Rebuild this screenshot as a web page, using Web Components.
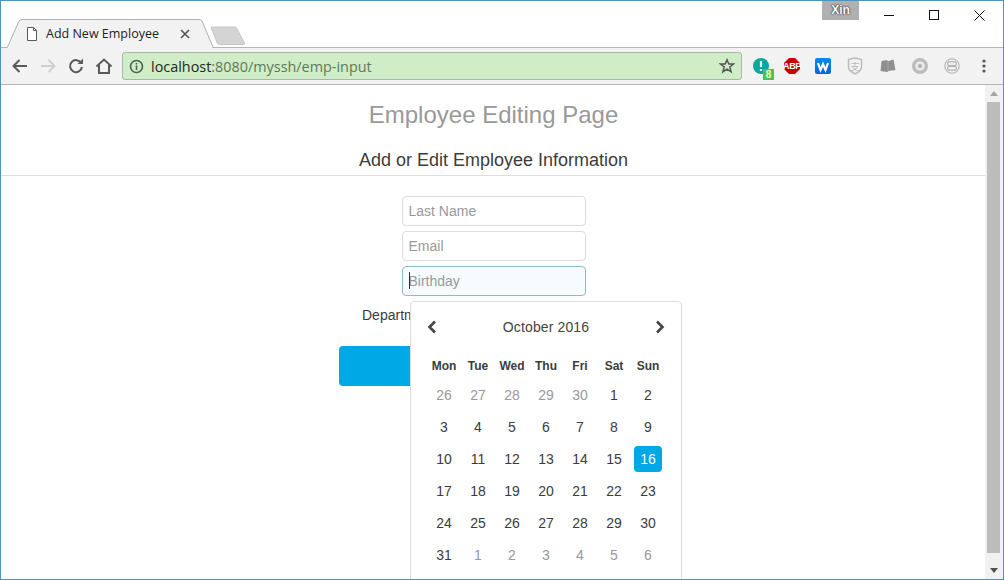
<!DOCTYPE html>
<html><head><meta charset="utf-8"><title>Add New Employee</title>
<style>html,body{margin:0;padding:0;width:1004px;height:580px;overflow:hidden;background:#fff}</style>
</head><body>
<browser-window>
  <browser-tabstrip slot="strip"></browser-tabstrip>
  <browser-toolbar slot="toolbar"></browser-toolbar>
  <browser-scrollbar slot="scroll"></browser-scrollbar>
  <employee-page></employee-page>
</browser-window>
<script>
function def(name, html){
  customElements.define(name, class extends HTMLElement{
    constructor(){super();this.attachShadow({mode:'open'}).innerHTML=html;}
  });
}
def('browser-window',`<style>
:host{display:flex;flex-direction:column;width:1004px;height:580px;box-sizing:border-box;border:1px solid #4a94bd;border-bottom-color:#5b8fb0;background:#fff;overflow:hidden}
.main{display:flex;flex:1;min-height:0}
.content{flex:1;min-width:0;position:relative;overflow:hidden}
</style><slot name="strip"></slot><slot name="toolbar"></slot>
<div class="main"><div class="content"><slot></slot></div><slot name="scroll"></slot></div>`);

def('browser-tabstrip',`<style>
:host{display:flex;height:47px;background:#fff;align-items:flex-start;position:relative;font-family:"Open Sans","Noto Sans",sans-serif}
.tab{position:relative;width:208px;height:29px;margin:18px 0 0 5px;display:flex;align-items:center;box-sizing:border-box;padding:0 0 0 20px;font-size:12.5px;color:#222;z-index:1}
.tab svg.bg{position:absolute;left:0;top:0}
.tab>*:not(.bg){position:relative}
.tab .title{margin-left:8px;width:134px;white-space:nowrap}
.new{margin:25px 0 0 -4px;flex:none}
.spacer{flex:1}
.xin{width:37px;height:19px;background:#b0b0b0;color:#fff;font:bold 12px/19px "Liberation Sans",sans-serif;text-align:center;text-shadow:0 0 2px #222,0 0 1px #222;margin-right:8px}
.ctl{width:45px;height:29px;display:flex;align-items:center;justify-content:center}
.ctl:last-child{margin-right:1px}
.line{position:absolute;left:0;right:0;bottom:0;height:1px;background:#b4b4b4}
</style>
<div class="line"></div>
<div class="tab">
<svg class="bg" width="208" height="29" viewBox="0 0 208 29"><path d="M0.5 29 L1.5 28 L13 2 Q14 .5 16 .5 L193 .5 Q195 .5 196 2 L207 28 L208 29Z" fill="#f2f2f2" stroke="#b0b0b0"/><rect x="2" y="28" width="204" height="1" fill="#f2f2f2"/></svg>
<svg width="12" height="14" viewBox="0 0 12 14"><path d="M1.5.5H7.5L10.5 3.5V13.5H1.5Z M7.5.5V3.5H10.5" fill="#fff" stroke="#5a5a5a"/></svg>
<span class="title">Add New Employee</span>
<svg width="10" height="10" viewBox="0 0 10 10"><path d="M1 1L9 9M9 1L1 9" stroke="#5a5a5a" stroke-width="1.7"/></svg>
</div>
<svg class="new" width="36" height="20" viewBox="0 0 36 20"><path d="M1 1.5Q1 1 2 1H25Q26 1 26.5 2L34.5 17Q35 18.500 33 18.500H9Q8 18.500 7.500 17.500Z" fill="#d4d4d4" stroke="#c6c6c6"/></svg>
<div class="spacer"></div>
<div class="xin">Xin</div>
<div class="ctl"><svg width="11" height="11" viewBox="0 0 11 11"><path d="M0 5.500H10" stroke="#111"/></svg></div>
<div class="ctl"><svg width="11" height="11" viewBox="0 0 11 11"><rect x=".5" y=".5" width="9" height="9" fill="none" stroke="#111"/></svg></div>
<div class="ctl"><svg width="11" height="11" viewBox="0 0 11 11"><path d="M.5.5L10.500 10.500M10.500.5L.5 10.500" stroke="#111"/></svg></div>`);

def('browser-toolbar',`<style>
:host{display:flex;align-items:center;height:37px;box-sizing:border-box;padding:0 0 0 5px;background:#f2f2f2;border-bottom:1px solid #b4b4b4}
.b{width:28px;height:28px;display:flex;align-items:center;justify-content:center;flex:none}
.omni{width:620px;height:28px;box-sizing:border-box;margin-left:4px;background:#cfedc7;border:1px solid #a9b5a6;border-radius:3px;display:flex;align-items:center;padding:0 6px 0 6px;font:14.4px "Open Sans","Noto Sans",sans-serif;color:#5d7a5a;flex:none}
.omni b{font-weight:400;color:#1c2a1a}
.url{flex:1;margin-left:7px;white-space:nowrap}
.exts{display:flex;margin-left:3px}
.e{width:32px;height:28px;display:flex;align-items:center;justify-content:center;position:relative}
.t{margin-left:-1px}
.g{margin-left:1px}
.badge{position:absolute;left:18px;top:17px;width:11px;height:11px;background:#4cc44c;color:#f2ffd0;font:bold 10px/11px "Liberation Sans",sans-serif;text-align:center}
.abp{position:absolute;color:#fff;font:bold 9px "Liberation Sans",sans-serif;letter-spacing:-.4px}
.shield{font:9px "Noto Sans CJK SC",sans-serif;fill:#b5b5b5}
</style>
<div class="b"><svg width="18" height="18" viewBox="0 0 18 18"><path d="M16 9H3M8.500 3L2.500 9L8.500 15" fill="none" stroke="#5a5a5a" stroke-width="2"/></svg></div>
<div class="b"><svg width="18" height="18" viewBox="0 0 18 18"><path d="M2 9H15M9.500 3L15.500 9L9.500 15" fill="none" stroke="#cfcfcf" stroke-width="2"/></svg></div>
<div class="b"><svg width="18" height="18" viewBox="0 0 18 18"><path d="M14.200 6A6 6 0 1 0 15 10" fill="none" stroke="#5a5a5a" stroke-width="2"/><path d="M10.500 7H16V1.500Z" fill="#5a5a5a"/></svg></div>
<div class="b"><svg width="18" height="18" viewBox="0 0 18 18"><path d="M1.500 9.500L9 2.500L16.500 9.500M4 8V16H14V8" fill="none" stroke="#5a5a5a" stroke-width="2"/></svg></div>
<div class="omni">
<svg width="15" height="15" viewBox="0 0 15 15"><circle cx="7.500" cy="7.500" r="6" fill="none" stroke="#4f5f4c" stroke-width="1.600"/><path d="M7.500 6.500V11M7.500 4V5.500" stroke="#4f5f4c" stroke-width="1.600"/></svg>
<span class="url"><b>localhost</b>:8080/myssh/emp-input</span>
<svg width="16" height="16" viewBox="0 0 16 16"><path d="M8 1.800L9.800 6H14.500L10.800 9L12.100 13.800L8 11.100L3.900 13.800L5.200 9L1.500 6H6.200Z" fill="none" stroke="#555" stroke-width="1.500"/></svg>
</div>
<div class="exts">
<div class="e"><svg width="16" height="16" viewBox="0 0 16 16"><circle cx="8" cy="8" r="8" fill="#0aa79f"/><path d="M8 3V9M8 11V13" stroke="#fff" stroke-width="2.200"/></svg><span class="badge">8</span></div>
<div class="e t"><svg width="16" height="16" viewBox="0 0 16 16"><path d="M5 0H11L16 5V11L11 16H5L0 11V5Z" fill="#c30000"/></svg><span class="abp">ABP</span></div>
<div class="e t"><svg width="16" height="16" viewBox="0 0 16 16"><defs><linearGradient id="w" x1="0" y1="0" x2="0" y2="1"><stop offset="0" stop-color="#0a8bf0"/><stop offset="1" stop-color="#0a62d8"/></linearGradient></defs><rect width="16" height="16" rx="2" fill="url(#w)"/><path d="M3 5L5.500 12L8 6L10.500 12L13 5" fill="none" stroke="#fff" stroke-width="2.200"/></svg></div>
<div class="e"><svg width="16" height="18" viewBox="0 0 16 18"><path d="M1.500 2.500L8 1L14.500 2.500V10Q14.500 14 8 17Q1.500 14 1.500 10Z" fill="#f2f2f2" stroke="#bdbdbd" stroke-width="1.500"/><text class="shield" x="8" y="12.500" text-anchor="middle">支</text></svg></div>
<div class="e g"><svg width="16" height="14" viewBox="0 0 16 14"><path d="M1.500 2L7 1L8 2.200L13.500 .5L15.500 11L8.500 12L7.500 13L.5 12Z" fill="#8f8f8f"/><path d="M8 2.200L8 12" stroke="#b5b5b5" stroke-width=".6"/></svg></div>
<div class="e"><svg width="16" height="16" viewBox="0 0 16 16"><circle cx="8" cy="8" r="6.300" fill="none" stroke="#bcbcbc" stroke-width="3.400"/><circle cx="8" cy="8" r="3.500" fill="#e6e6e6"/><circle cx="8" cy="8" r="2" fill="#b0b0b0"/></svg></div>
<div class="e"><svg width="16" height="16" viewBox="0 0 16 16"><circle cx="8" cy="8" r="7.200" fill="none" stroke="#bcbcbc" stroke-width="1.300"/><rect x="3.800" y="3.800" width="8.400" height="3.700" rx="1" fill="none" stroke="#b0b0b0" stroke-width="1.200"/><rect x="3.800" y="8.500" width="8.400" height="3.700" rx="1" fill="none" stroke="#b0b0b0" stroke-width="1.200"/></svg></div>
<div class="e"><svg width="4" height="14" viewBox="0 0 4 14"><circle cx="2" cy="2" r="1.600" fill="#555"/><circle cx="2" cy="7" r="1.600" fill="#555"/><circle cx="2" cy="12" r="1.600" fill="#555"/></svg></div>
</div>`);

def('browser-scrollbar',`<style>
:host{display:flex;flex-direction:column;width:18px;box-sizing:border-box;padding-left:2px;flex:none;background:#f1f1f1}
.a{width:13px;height:17px;display:flex;align-items:center;justify-content:center;flex:none}
.t{flex:1;width:13px;background:#bcbcbc;margin-bottom:9px}
</style><div class="a"><svg width="8" height="5" viewBox="0 0 8 5"><path d="M4 0L8 5H0Z" fill="#a5a5a5"/></svg></div><div class="t"></div><div class="a"><svg width="8" height="5" viewBox="0 0 8 5"><path d="M0 0H8L4 5Z" fill="#505050"/></svg></div>`);

def('form-input',`<style>
:host{display:block;width:184px;height:30px;box-sizing:border-box;border:1px solid #dcdcdc;border-radius:4px;padding:0 6px;font:14px/28px "Liberation Sans",sans-serif;color:#999;background:#fff}
:host([focused]){background:#f5fbfe;border-color:#8fb8cf}
.caret{display:none;position:absolute;width:1px;height:17px;background:#333;margin-top:5px}
:host([focused]) .caret{display:inline-block}
</style><span class="caret"></span><slot></slot>`);

def('date-picker',`<style>
:host{display:block;position:absolute;left:409px;top:216px;width:272px;height:300px;box-sizing:border-box;background:#fff;border:1px solid #ddd;border-radius:4px;padding:0 16px;font:14px "Liberation Sans",sans-serif;color:#3c3c3c}
.head{display:flex;align-items:center;justify-content:space-between;height:50px;margin:0 -1px;color:#444;font-size:14px}
.head span{letter-spacing:.12px}
.head svg{display:block}
.grid{display:grid;grid-template-columns:repeat(7,34px);grid-template-rows:27px;grid-auto-rows:32px;text-align:center}
.dow{height:28px;display:flex;align-items:center;justify-content:center;font-weight:bold;font-size:12px}
.grid>div{display:flex;align-items:center;justify-content:center}
.o{color:#999}
.s{background:#00a8e6;color:#fff;border-radius:4px;width:28px;height:26px;justify-self:center;align-self:center}
</style>
<div class="head"><svg width="12" height="14" viewBox="0 0 12 14"><path d="M9 1.500L3.500 7L9 12.500" fill="none" stroke="#444" stroke-width="2.600"/></svg>
<span>October 2016</span>
<svg width="12" height="14" viewBox="0 0 12 14"><path d="M3 1.500L8.500 7L3 12.500" fill="none" stroke="#444" stroke-width="2.600"/></svg></div>
<div class="grid" id="g">
<div class="dow">Mon</div><div class="dow">Tue</div><div class="dow">Wed</div><div class="dow">Thu</div><div class="dow">Fri</div><div class="dow">Sat</div><div class="dow">Sun</div>
<div class="o">26</div><div class="o">27</div><div class="o">28</div><div class="o">29</div><div class="o">30</div><div>1</div><div>2</div>
<div>3</div><div>4</div><div>5</div><div>6</div><div>7</div><div>8</div><div>9</div>
<div>10</div><div>11</div><div>12</div><div>13</div><div>14</div><div>15</div><div class="s">16</div>
<div>17</div><div>18</div><div>19</div><div>20</div><div>21</div><div>22</div><div>23</div>
<div>24</div><div>25</div><div>26</div><div>27</div><div>28</div><div>29</div><div>30</div>
<div>31</div><div class="o">1</div><div class="o">2</div><div class="o">3</div><div class="o">4</div><div class="o">5</div><div class="o">6</div>
</div>`);

def('employee-page',`<style>
:host{display:flex;flex-direction:column;align-items:center;height:100%;box-sizing:border-box;padding-left:1px;font:14px "Liberation Sans",sans-serif;color:#3c3c3c}
h1{font-size:24px;font-weight:400;color:#999;margin:16px 0 0;line-height:28px}
h2{font-size:18px;font-weight:400;color:#3c3c3c;margin:20px 0 0;line-height:22px}
hr{align-self:stretch;border:0;border-top:1px solid #ddd;margin:4px 0 20px -1px;height:0}
.fields{display:flex;flex-direction:column;gap:5px}
.dept{width:263px;margin-top:11px;line-height:16px}
.btn{width:309px;height:40px;margin-top:23px;background:#00a8e6;border-radius:4px;flex:none}
</style>
<h1>Employee Editing Page</h1>
<h2>Add or Edit Employee Information</h2>
<hr>
<div class="fields">
<form-input>Last Name</form-input>
<form-input>Email</form-input>
<form-input focused>Birthday</form-input>
</div>
<div class="dept">Department</div>
<div class="btn"></div>
<date-picker></date-picker>`);
</script>
</body></html>
